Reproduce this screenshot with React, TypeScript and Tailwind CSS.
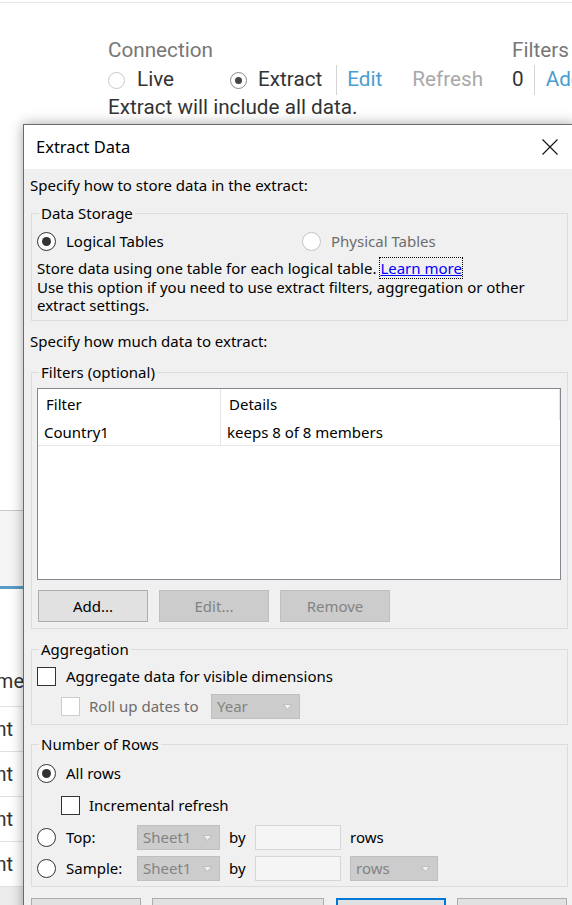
import React from "react";

function Radio({ checked = false, disabled = false }: { checked?: boolean; disabled?: boolean }) {
  return (
    <span
      className={`flex h-[19px] w-[19px] shrink-0 items-center justify-center rounded-full border-[1.5px] bg-white ${
        disabled ? "border-[#c4c4c4]" : "border-[#333333]"
      }`}
    >
      {checked && <span className="h-[9px] w-[9px] rounded-full bg-[#333333]" />}
    </span>
  );
}

function Check({ disabled = false }: { disabled?: boolean }) {
  return (
    <span
      className={`block h-[19px] w-[19px] shrink-0 border bg-white ${
        disabled ? "border-[#cccccc]" : "border-[#333333]"
      }`}
    />
  );
}

function Arrow() {
  return (
    <svg width="9" height="6" viewBox="0 0 9 6" className="shrink-0">
      <polygon points="0.5,0.5 8.5,0.5 4.5,5.5" fill="#f2f2f2" stroke="#a8a8a8" strokeWidth="0.6" />
    </svg>
  );
}

function Select({ text, className }: { text: string; className: string }) {
  return (
    <div
      className={`flex h-[25px] items-center justify-between border border-[#bfbfbf] bg-[#cccccc] pl-[5px] pr-[7px] text-[#838383] ${className}`}
    >
      <span>{text}</span>
      <Arrow />
    </div>
  );
}

function Group({ title, className, children }: { title: string; className: string; children?: React.ReactNode }) {
  return (
    <div className={`relative border border-[#dcdcdc] ${className}`}>
      <span className="absolute left-[7px] top-[-1px] -translate-y-1/2 bg-[#f0f0f0] px-[2px] leading-[19px]">
        {title}
      </span>
      {children}
    </div>
  );
}

function TopRadio({ checked = false }: { checked?: boolean }) {
  return (
    <span
      className={`flex h-[17px] w-[17px] shrink-0 items-center justify-center rounded-full border bg-white ${
        checked ? "border-[#8a8a8a]" : "border-[#c8c8c8]"
      }`}
    >
      {checked && <span className="h-[7px] w-[7px] rounded-full bg-[#444444]" />}
    </span>
  );
}

export default function App() {
  return (
    <div className="relative h-[905px] w-[572px] overflow-hidden bg-white font-['Roboto',sans-serif]">
      {/* background app */}
      <div className="h-[3px] border-b border-[#e6e6e6]" />
      <div className="flex whitespace-nowrap pl-[108px] pt-[35px] text-[20.7px]">
        <div className="w-[404px] shrink-0">
          <div className="h-[24px] leading-[24px] text-[#777777]">Connection</div>
          <div className="mt-[3px] flex h-[30px] items-center text-[#333333]">
            <div className="flex w-[122px] items-center gap-[12px]">
              <TopRadio />
              <span>Live</span>
            </div>
            <div className="flex items-center gap-[11px]">
              <TopRadio checked />
              <span>Extract</span>
            </div>
            <span className="ml-[14px] h-[30px] w-px bg-[#d4d4d4]" />
            <span className="ml-[10px] text-[#4a9dd0]">Edit</span>
            <span className="ml-[30px] text-[#a9a9a9]">Refresh</span>
          </div>
          <div className="h-[24px] leading-[24px] text-[#333333]">Extract will include all data.</div>
        </div>
        <div className="shrink-0">
          <div className="h-[24px] leading-[24px] text-[#777777]">Filters</div>
          <div className="mt-[3px] flex h-[30px] items-center text-[#333333]">
            <span>0</span>
            <span className="ml-[10px] h-[30px] w-px bg-[#d4d4d4]" />
            <span className="ml-[11px] text-[#4a9dd0]">Add</span>
          </div>
        </div>
      </div>

      <div className="mt-[391px] h-[76px] border-t border-[#c8c8c8] bg-[#f5f5f5]" />
      <div className="h-[3px] bg-[#5a9bc8]" />
      <div className="flex h-[118px] items-end border-b border-[#e0e0e0] pb-[13px] text-[20px] text-[#333333]">
        <div className="flex w-[24px] justify-end overflow-hidden whitespace-nowrap leading-[24px]">Name</div>
      </div>
      {[0, 1, 2, 3].map((i) => (
        <div key={i} className="flex h-[45px] items-center border-b border-[#e0e0e0] text-[20px] text-[#333333]">
          <div className="flex w-[13px] justify-end overflow-hidden whitespace-nowrap leading-[24px]">Count</div>
        </div>
      ))}
      <div className="h-[40px] bg-[#ececec]" />

      {/* dialog */}
      <div className="absolute left-[23px] top-[124px] h-[800px] w-[553px] border border-[#6b6b6b] bg-[#f0f0f0] font-['Segoe_UI','Noto_Sans',sans-serif] text-[15px] text-black shadow-[0_0_12px_rgba(0,0,0,0.35)]">
        <div className="flex h-[44px] items-center justify-between bg-white pl-[12px] pr-[17px]">
          <span className="text-[16.5px]">Extract Data</span>
          <svg width="16" height="16" viewBox="0 0 16 16">
            <path d="M0.5 0.5 L15.5 15.5 M15.5 0.5 L0.5 15.5" stroke="#111" strokeWidth="1.1" />
          </svg>
        </div>

        <div className="pl-[7px] pt-[7px] leading-[19px]">
          <div className="-ml-px">Specify how to store data in the extract:</div>

          <Group title="Data Storage" className="mt-[18px] h-[108px] w-[537px]">
            <div className="pl-[5px] pt-[17px]">
              <div className="flex h-[20px] items-center">
                <div className="flex w-[265px] items-center gap-[10px]">
                  <Radio checked />
                  <span>Logical Tables</span>
                </div>
                <div className="flex items-center gap-[10px]">
                  <Radio disabled />
                  <span className="text-[#6d6d6d]">Physical Tables</span>
                </div>
              </div>
              <div className="mt-[8px] leading-[18.5px]">
                Store data using one table for each logical table.{" "}
                <span className="text-[#0000ff] underline outline-1 outline-dotted outline-black">Learn more</span>
                <br />
                Use this option if you need to use extract filters, aggregation or other
                <br />
                extract settings.
              </div>
            </div>
          </Group>

          <div className="-ml-px mt-[11px]">Specify how much data to extract:</div>

          <Group title="Filters (optional)" className="mt-[21px] h-[257px] w-[537px]">
            <div className="pl-[5px] pt-[15px]">
              <div className="h-[192px] w-[524px] border border-[#828790] bg-white">
                <div className="flex h-[31px]">
                  <div className="flex w-[183px] items-center border-r border-[#e5e5e5] pl-[8px]">Filter</div>
                  <div className="flex w-[339px] items-center border-r border-[#e5e5e5] pl-[8px]">Details</div>
                </div>
                <div className="flex h-[26px] w-[522px] border-b border-[#e8e8e8]">
                  <div className="flex w-[183px] items-center border-r border-[#e5e5e5] pl-[6px]">Country1</div>
                  <div className="flex items-center pl-[6px]">keeps 8 of 8 members</div>
                </div>
              </div>
              <div className="mt-[10px] flex gap-[11px] pl-px">
                <div className="flex h-[32px] w-[110px] items-center justify-center border border-[#adadad] bg-[#e1e1e1]">
                  Add...
                </div>
                <div className="flex h-[32px] w-[110px] items-center justify-center border border-[#bfbfbf] bg-[#cccccc] text-[#838383]">
                  Edit...
                </div>
                <div className="flex h-[32px] w-[110px] items-center justify-center border border-[#bfbfbf] bg-[#cccccc] text-[#838383]">
                  Remove
                </div>
              </div>
            </div>
          </Group>

          <Group title="Aggregation" className="mt-[20px] h-[76px] w-[537px]">
            <div className="pl-[5px] pt-[16px]">
              <div className="flex h-[20px] items-center gap-[10px]">
                <Check />
                <span>Aggregate data for visible dimensions</span>
              </div>
              <div className="mt-[8px] flex h-[25px] items-center pl-[24px]">
                <Check disabled />
                <span className="ml-[9px] w-[122px] text-[#6d6d6d]">Roll up dates to</span>
                <Select text="Year" className="w-[89px]" />
              </div>
            </div>
          </Group>

          <Group title="Number of Rows" className="mt-[19px] h-[143px] w-[537px]">
            <div className="pl-[5px] pt-[18px]">
              <div className="flex h-[20px] items-center gap-[10px]">
                <Radio checked />
                <span>All rows</span>
              </div>
              <div className="mt-[12px] flex h-[20px] items-center pl-[24px]">
                <Check />
                <span className="ml-[9px]">Incremental refresh</span>
              </div>
              <div className="mt-[10px] flex h-[25px] items-center">
                <Radio />
                <span className="ml-[10px] w-[71px]">Top:</span>
                <Select text="Sheet1" className="w-[83px]" />
                <span className="ml-[9px] w-[26px]">by</span>
                <div className="h-[25px] w-[86px] border border-[#d6d6d6] bg-[#f5f5f5]" />
                <span className="ml-[9px]">rows</span>
              </div>
              <div className="mt-[6px] flex h-[25px] items-center">
                <Radio />
                <span className="ml-[10px] w-[71px]">Sample:</span>
                <Select text="Sheet1" className="w-[83px]" />
                <span className="ml-[9px] w-[26px]">by</span>
                <div className="h-[25px] w-[86px] border border-[#d6d6d6] bg-[#f5f5f5]" />
                <Select text="rows" className="ml-[9px] w-[88px]" />
              </div>
            </div>
          </Group>

          <div className="mt-[11px] flex">
            <div className="flex h-[32px] w-[110px] items-center justify-center border border-[#adadad] bg-[#e1e1e1]">
              History...
            </div>
            <div className="ml-[11px] flex h-[32px] w-[172px] items-center justify-center border border-[#adadad] bg-[#e1e1e1]">
              Hide All Unused Fields
            </div>
            <div className="ml-[12px] flex h-[32px] w-[110px] items-center justify-center border-2 border-[#0078d7] bg-[#e1e1e1]">
              OK
            </div>
            <div className="ml-[11px] flex h-[32px] w-[110px] items-center justify-center border border-[#adadad] bg-[#e1e1e1]">
              Cancel
            </div>
          </div>
        </div>
      </div>
    </div>
  );
}
